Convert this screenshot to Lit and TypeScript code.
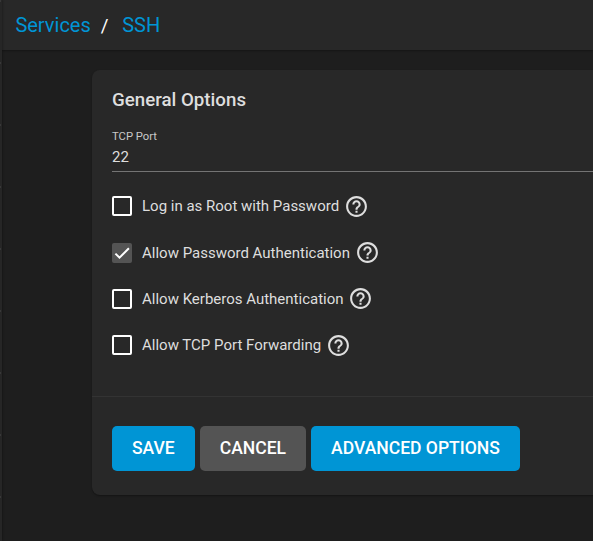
import { LitElement, html, css, svg } from "lit";
import { customElement, property } from "lit/decorators.js";

@customElement("option-row")
class OptionRow extends LitElement {
  @property() label = "";
  @property({ type: Boolean }) checked = false;

  static styles = css`
    :host { display: flex; align-items: center; height: 46px; }
    .box { box-sizing: border-box; width: 20px; height: 20px; flex: none; border: 2px solid #fff; border-radius: 2px; margin-right: 10px; }
    .box.checked { border: 0; background: #545454; }
    .box svg { display: block; width: 20px; height: 20px; }
    .label { font-size: 15px; line-height: 24px; color: #dedede; white-space: nowrap; }
    .help { width: 25px; height: 25px; flex: none; margin-left: var(--help-gap, 5px); margin-bottom: var(--help-lift, 0); fill: #dedede; }
  `;

  render() {
    return html`
      <div class="box ${this.checked ? "checked" : ""}">
        ${this.checked
          ? html`<svg viewBox="0 0 24 24">${svg`<path d="M4.1 12.7 9 17.6 20.3 6.3" fill="none" stroke="#fff" stroke-width="2.4"/>`}</svg>`
          : ""}
      </div>
      <span class="label">${this.label}</span>
      <svg class="help" viewBox="0 0 24 24"><path d="M11 18h2v-2h-2v2zm1-16C6.48 2 2 6.48 2 12s4.480 10 10 10 10-4.480 10-10S17.520 2 12 2zm0 18c-4.410 0-8-3.590-8-8s3.590-8 8-8 8 3.590 8 8-3.590 8-8 8zm0-14c-2.210 0-4 1.790-4 4h2c0-1.100.9-2 2-2s2 .9 2 2c0 2-3 1.750-3 5h2c0-2.250 3-2.500 3-5 0-2.210-1.790-4-4-4z"/></svg>
    `;
  }
}

@customElement("app-root")
class AppRoot extends LitElement {
  static styles = css`
    :host { display: flex; height: 541px; overflow: hidden; background: #1e1e1e; font-family: Roboto, sans-serif; color: #dedede; }
    .rail { width: 2px; flex: none; background: repeating-linear-gradient(#383838 0 2px, transparent 2px 62px) 0 0 / 1px 100% no-repeat #262626; box-shadow: 1px 0 2px rgba(0, 0, 0, 0.25); z-index: 1; }
    .main { flex: 1; min-width: 0; }
    .crumbs { box-sizing: border-box; height: 50px; padding: 0 13.4px; display: flex; align-items: center; background: #282828; font-size: 20px; line-height: 24px; color: #0095d5; box-shadow: 0 1px 2px rgba(0, 0, 0, 0.3); }
    .sep { color: #fff; font-size: 18.72px; margin: 2px 13.7px 0 10px; }
    .card { box-sizing: border-box; width: 720px; height: 425px; margin: 20px 0 0 90px; background: #282828; border-radius: 8px; box-shadow: 0 1px 2px rgba(0, 0, 0, 0.35); display: flex; flex-direction: column; }
    .fields { box-sizing: border-box; height: 326px; padding: 18px 20px 0; }
    h3 { margin: 0; font-size: 18.72px; line-height: 24px; font-weight: 500; }
    .caption { margin-top: 18px; font-size: 11.25px; line-height: 14px; color: #c8c8c8; }
    .value { box-sizing: border-box; height: 28px; padding-top: 4px; font-size: 15px; line-height: 18px; border-bottom: 1px solid #747474; margin-bottom: 11px; }
    .first { margin-bottom: 1px; }
    .raised { --help-lift: 2px; }
    .tight { --help-gap: 4.5px; }
    .actions { flex: 1; border-top: 1px solid #333; padding: 29px 20px 0; display: flex; align-items: flex-start; gap: 5px; }
    button { height: 45px; padding: 0 20px 2px; border: 0; border-radius: 5px; background: #0095d5; color: #fff; font: 500 17.55px/24px Roboto, sans-serif; white-space: nowrap; }
    .cancel { background: #545454; }
  `;

  render() {
    return html`
      <div class="rail"></div>
      <div class="main">
        <nav class="crumbs"><span>Services</span><span class="sep">/</span><span>SSH</span></nav>
        <section class="card">
          <div class="fields">
            <h3>General Options</h3>
            <div class="caption">TCP Port</div>
            <div class="value">22</div>
            <option-row class="first" label="Log in as Root with Password"></option-row>
            <option-row class="raised" label="Allow Password Authentication" checked></option-row>
            <option-row class="raised tight" label="Allow Kerberos Authentication"></option-row>
            <option-row label="Allow TCP Port Forwarding"></option-row>
          </div>
          <div class="actions">
            <button>SAVE</button><button class="cancel">CANCEL</button><button>ADVANCED OPTIONS</button>
          </div>
        </section>
      </div>
    `;
  }
}
